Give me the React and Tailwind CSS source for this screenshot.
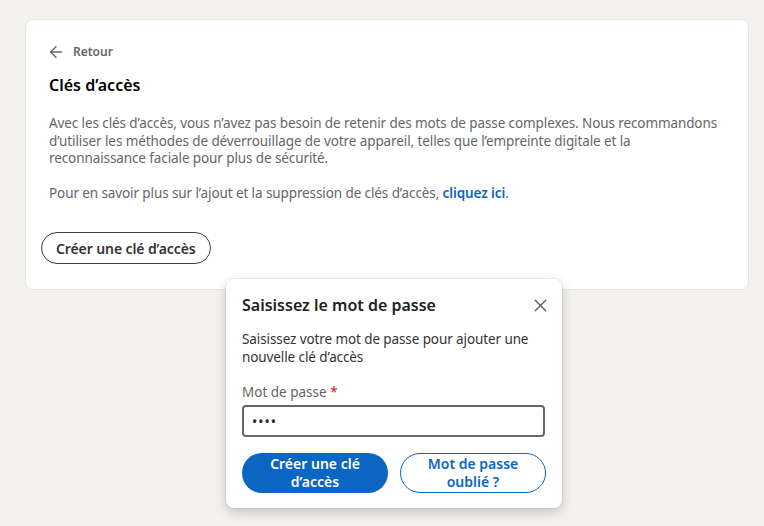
import React from 'react';
import { ArrowLeft, X } from 'lucide-react';

const font = { fontFamily: '"Noto Sans", "Open Sans", sans-serif' };

const App = () => {
  return (
    <div className="min-h-screen w-[764px] h-[526px] bg-[#f3f2ef] pt-[19px] pl-[25px] pr-[15px] overflow-hidden" style={font}>
      <div className="bg-white rounded-lg h-[271px] pt-[24px] pb-[24px] border border-[#e8e6e1]">
        <div className="px-[23px]">
          <button className="flex items-center gap-[8px] text-[#666] text-[12px] font-semibold h-[16px] -ml-[2px]">
            <ArrowLeft className="w-[18px] h-[18px]" strokeWidth={2} />
            Retour
          </button>
          <h1 className="mt-[15px] text-[16px] font-semibold text-black leading-5">Clés d’accès</h1>
          <p className="mt-[20px] text-[13.5px] leading-[17.5px] text-[#666] tracking-[-0.1px]">
            Avec les clés d’accès, vous n’avez pas besoin de retenir des mots de passe complexes. Nous recommandons d’utiliser les méthodes de déverrouillage de votre appareil, telles que l’empreinte digitale et la reconnaissance faciale pour plus de sécurité.
          </p>
          <p className="mt-[17px] text-[13.5px] leading-[17.5px] text-[#666] tracking-[-0.1px]">
            Pour en savoir plus sur l’ajout et la suppression de clés d’accès, <a className="text-[#0a66c2] font-semibold">cliquez ici</a>.
          </p>
        </div>
        <div className="px-[15px] mt-[30px]">
          <button className="h-[32px] px-[14px] rounded-full border border-[#404040] text-[14px] font-semibold text-[#333] tracking-[-0.1px]">
            Créer une clé d’accès
          </button>
        </div>
      </div>

      <div className="relative">
        <div className="absolute left-[201px] top-[-11px] w-[336px] bg-white rounded-lg shadow-[0_4px_12px_rgba(0,0,0,0.2),0_0_0_1px_rgba(0,0,0,0.05)] px-[16px] pt-[14px] pb-[15px]">
          <div className="flex items-center justify-between">
            <h2 className="text-[16px] font-semibold text-[#222] leading-6">Saisissez le mot de passe</h2>
            <X className="w-[21px] h-[21px] text-[#555] mr-[-5px]" strokeWidth={1.5} />
          </div>
          <p className="mt-[14px] text-[13.5px] leading-[17.5px] text-[#333] tracking-[-0.1px]">
            Saisissez votre mot de passe pour ajouter une nouvelle clé d’accès
          </p>
          <div className="mt-[17px] text-[13.5px] text-[#666] leading-[18px]">
            Mot de passe <span className="text-[#cc1016]">*</span>
          </div>
          <div className="mt-[4px] h-[32px] w-[303px] border-2 border-[#666] rounded-[4px] flex items-center px-[8px] text-[#222] text-[14px] tracking-[1px]">
            ••••
          </div>
          <div className="mt-[16px] flex gap-[12px]">
            <button className="w-[146px] h-[40px] rounded-full bg-[#0a66c2] text-white text-[14px] font-semibold leading-[18px]">
              Créer une clé<br />d’accès
            </button>
            <button className="w-[146px] h-[40px] rounded-full border border-[#0a66c2] text-[#0a66c2] text-[14px] font-semibold leading-[18px]">
              Mot de passe<br />oublié ?
            </button>
          </div>
        </div>
      </div>
    </div>
  );
};

export default App;
